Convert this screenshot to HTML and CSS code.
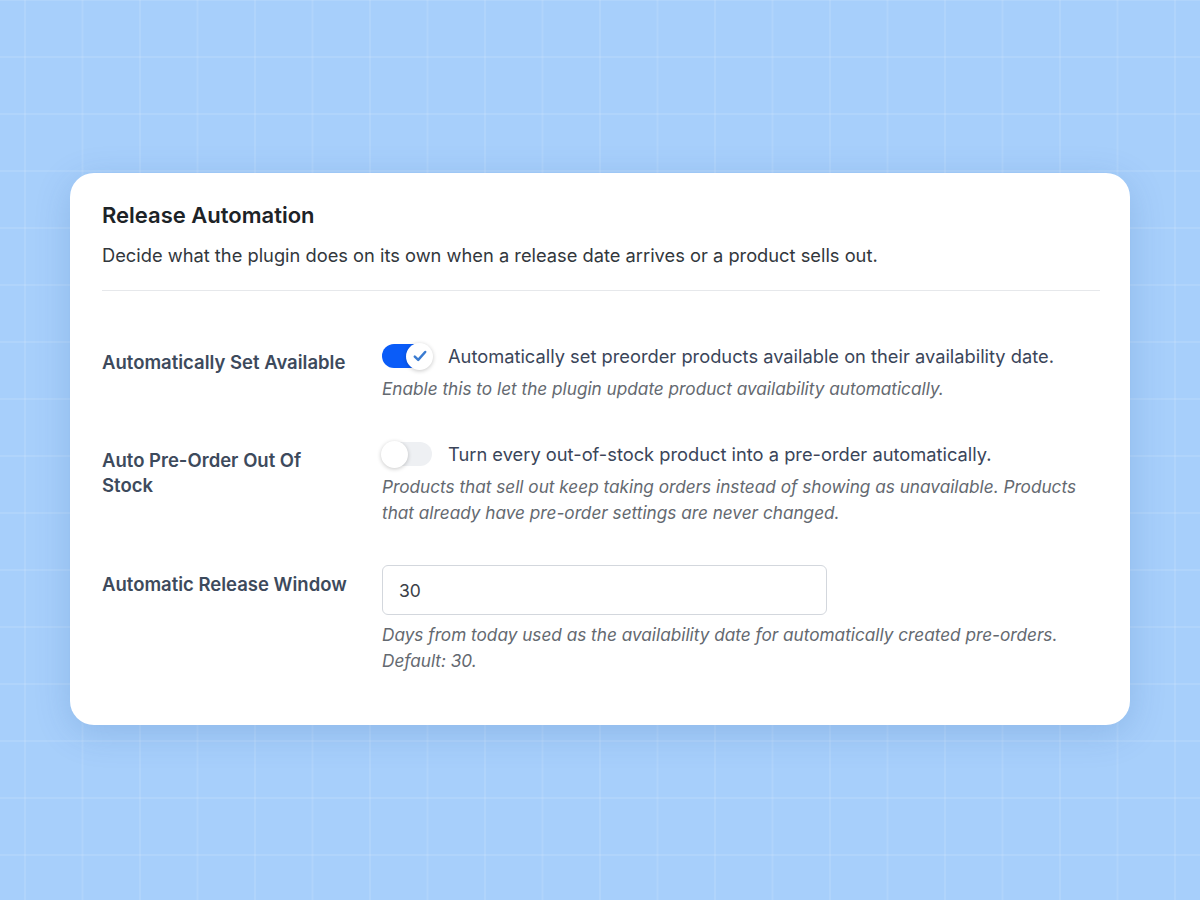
FILE: index.html
```html
<!DOCTYPE html>
<html>
  <head>
    <title>Release Automation</title>
    <meta charset="UTF-8">
    <meta name="viewport" content="width=device-width, initial-scale=1.0">
    <link rel="stylesheet" href="styles.css">
  </head>
  <body>
    <div class="panel">
      <h2 class="panel-title">Release Automation</h2>
      <p class="panel-intro">Decide what the plugin does on its own when a release date arrives or a product sells out.</p>
      <hr class="divider">

      <div class="settings">
        <div class="setting">
          <label class="setting-label" for="auto-available">Automatically Set Available</label>
          <div class="setting-field">
            <label class="switch-line">
              <span class="switch on" id="auto-available">
                <span class="knob">
                  <svg width="18" height="18" viewBox="0 0 18 18"><path d="M3.8 9.6l3.4 3.2 7-7.8" fill="none" stroke="#3a7bd0" stroke-width="2.5" stroke-linecap="round" stroke-linejoin="round"/></svg>
                </span>
              </span>
              <span>Automatically set preorder products available on their availability date.</span>
            </label>
            <p class="hint">Enable this to let the plugin update product availability automatically.</p>
          </div>
        </div>

        <div class="setting">
          <label class="setting-label" for="auto-preorder">Auto Pre-Order Out Of Stock</label>
          <div class="setting-field">
            <label class="switch-line">
              <span class="switch" id="auto-preorder"><span class="knob"></span></span>
              <span>Turn every out-of-stock product into a pre-order automatically.</span>
            </label>
            <p class="hint">Products that sell out keep taking orders instead of showing as unavailable. Products that already have pre-order settings are never changed.</p>
          </div>
        </div>

        <div class="setting">
          <label class="setting-label" for="release-window">Automatic Release Window</label>
          <div class="setting-field">
            <input type="text" id="release-window" class="text-input" value="30">
            <p class="hint">Days from today used as the availability date for automatically created pre-orders. Default: 30.</p>
          </div>
        </div>
      </div>
    </div>
  </body>
</html>
```

FILE: styles.css
```css
html, body {
  height: 100%;
}
body {
  margin: 0;
  font-family: Inter, "Noto Sans", sans-serif;
  background-color: #a7cffb;
  background-image:
    linear-gradient(to right, rgba(255, 255, 255, 0.1) 2px, transparent 2px),
    linear-gradient(to bottom, rgba(255, 255, 255, 0.1) 2px, transparent 2px);
  background-size: 57.5px 57px;
  background-position: 24px 56px;
  display: flex;
  align-items: flex-start;
  justify-content: center;
}
.panel {
  width: 1060px;
  box-sizing: border-box;
  margin-top: 173px;
  padding: 28px 30px 51px 32px;
  background: #fff;
  border-radius: 24px;
  box-shadow: 0 8px 36px rgba(40, 90, 160, 0.2);
}
.panel-title {
  margin: 0;
  font-size: 22px;
  line-height: 28px;
  font-weight: 600;
  color: #1d2327;
}
.panel-intro {
  margin: 13px 0 0;
  font-size: 18.3px;
  line-height: 26px;
  color: #32373c;
}
.divider {
  margin: 22px 0 0;
  border: 0;
  border-top: 1px solid #e6e8eb;
}
.settings {
  padding-top: 52px;
  display: flex;
  flex-direction: column;
  gap: 39px;
}
.setting {
  display: grid;
  grid-template-columns: 280px 1fr;
}
.setting-label {
  padding-top: 7px;
  padding-right: 28px;
  font-size: 18.5px;
  line-height: 25px;
  font-weight: 600;
  color: #3d4a5c;
}
.switch-line {
  display: flex;
  align-items: center;
  gap: 16px;
  font-size: 18.3px;
  line-height: 26px;
  color: #3a4559;
}
.switch {
  position: relative;
  flex: none;
  width: 50px;
  height: 24px;
  border-radius: 12px;
  background: #eef0f3;
}
.switch.on {
  background: #0a5cf8;
}
.knob {
  position: absolute;
  top: -1.5px;
  left: -1px;
  width: 27px;
  height: 27px;
  border-radius: 50%;
  background: #fff;
  box-shadow: 0 1px 4px rgba(0, 0, 0, 0.22);
  display: flex;
  align-items: center;
  justify-content: center;
}
.switch.on .knob {
  left: auto;
  right: -1px;
}
.hint {
  margin: 7px 0 0;
  font-size: 17.2px;
  line-height: 26px;
  font-style: italic;
  color: #646970;
}
.text-input {
  display: block;
  width: 445px;
  height: 50px;
  box-sizing: border-box;
  padding: 0 16px;
  border: 1px solid #d3d7dd;
  border-radius: 6px;
  font-family: inherit;
  font-size: 17.5px;
  color: #3a4048;
}
```
